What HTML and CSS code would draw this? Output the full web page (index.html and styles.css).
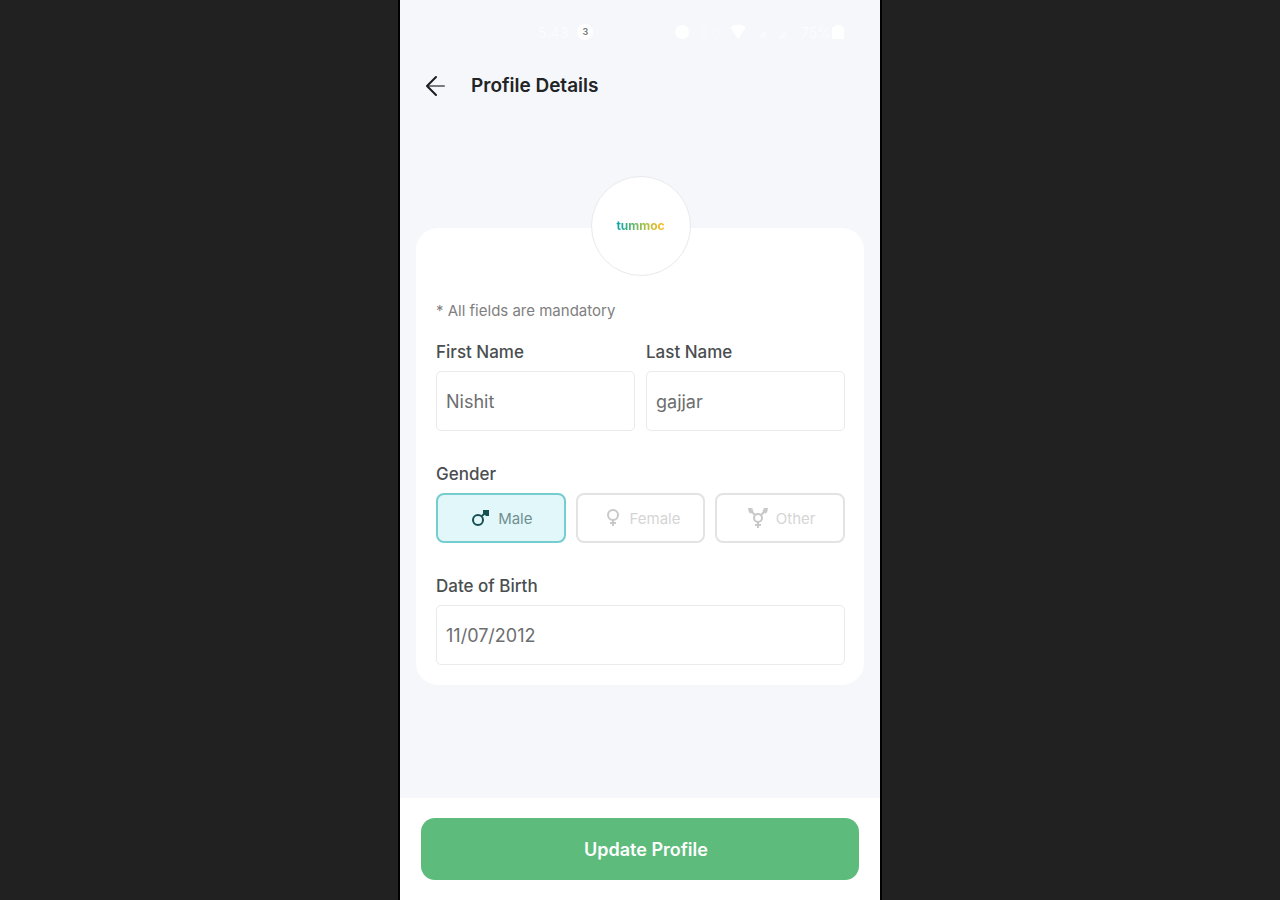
FILE: index.html
```html
<!DOCTYPE html>
<html lang="en">
<head>
    <meta charset="UTF-8">
    <meta name="viewport" content="width=device-width, initial-scale=1.0">
    <title>Profile Details</title>
    <link rel="stylesheet" href="styles.css">
</head>
<body>
    <div class="phone">
        <div class="status-bar">
            <div class="status-left">
                <span>5:43</span>
                <span class="status-badge">3</span>
            </div>
            <div class="status-right">
                <svg width="16" height="16" viewBox="0 0 16 16"><circle cx="8" cy="8" r="7" fill="#fff"/></svg>
                <span class="faint">5.0</span>
                <svg width="18" height="16" viewBox="0 0 18 16"><path d="M1 3 Q9 -2 17 3 L9 15 Z" fill="#fff"/></svg>
                <svg class="faint" width="36" height="16" viewBox="0 0 36 16"><path d="M2 14h8V6zM22 14h8V6z" fill="#fff"/></svg>
                <span class="battery">75%<svg width="14" height="16" viewBox="0 0 14 16"><path d="M1 3h3V1h6v2h3v12H1z" fill="#fff"/></svg></span>
            </div>
        </div>

        <header class="header">
            <button type="button" class="back-button" aria-label="Back">
                <svg width="22" height="22" viewBox="0 0 22 22" fill="none" stroke-linecap="round" stroke-linejoin="round">
                    <path d="M3 11h16" stroke="#77797c" stroke-width="2"/>
                    <path d="M11 2L2 11l9 9" stroke="#1b1d1f" stroke-width="2"/>
                </svg>
            </button>
            <h1>Profile Details</h1>
        </header>

        <form class="profile-form" id="profileForm">
            <div class="card">
                <div class="avatar">tummoc</div>
                <p class="note">* All fields are mandatory</p>

                <div class="name-row">
                    <div class="field">
                        <label for="firstName">First Name</label>
                        <input type="text" id="firstName" value="Nishit">
                    </div>
                    <div class="field">
                        <label for="lastName">Last Name</label>
                        <input type="text" id="lastName" value="gajjar">
                    </div>
                </div>

                <fieldset class="field">
                    <legend>Gender</legend>
                    <div class="gender-row">
                        <label class="gender-option">
                            <input type="radio" name="gender" value="male" checked>
                            <svg width="18" height="18" viewBox="0 0 18 18" fill="none" stroke="currentColor" stroke-width="2">
                                <circle cx="6" cy="11" r="5"/>
                                <path d="M10 7l3-3"/>
                                <path d="M11 1h6v6h-3l-3-3z" fill="currentColor" stroke="none"/>
                            </svg>
                            <span>Male</span>
                        </label>
                        <label class="gender-option">
                            <input type="radio" name="gender" value="female">
                            <svg width="18" height="18" viewBox="0 0 18 18" fill="none" stroke="currentColor" stroke-width="2">
                                <circle cx="9" cy="6" r="5"/>
                                <path d="M9 11v6M6 14h6"/>
                            </svg>
                            <span>Female</span>
                        </label>
                        <label class="gender-option">
                            <input type="radio" name="gender" value="other">
                            <svg width="20" height="20" viewBox="0 0 20 20" fill="none" stroke="currentColor" stroke-width="2">
                                <circle cx="10" cy="10" r="4"/>
                                <path d="M10 14v6M7 17h6M7 7L2 2M13 7l5-5M2 5l3-3M15 2l3 3"/>
                                <path d="M0 0h5L1 5zM20 0h-5l4 5z" fill="currentColor" stroke="none"/>
                            </svg>
                            <span>Other</span>
                        </label>
                    </div>
                </fieldset>

                <div class="field">
                    <label for="birthDate">Date of Birth</label>
                    <input type="text" id="birthDate" value="11/07/2012">
                </div>
            </div>
        </form>

        <footer class="footer">
            <button type="submit" form="profileForm" class="update-button">Update Profile</button>
        </footer>
    </div>
</body>
</html>
```
FILE: styles.css
```css
* {
    box-sizing: border-box;
}
body {
    font-family: Inter, "Liberation Sans", sans-serif;
    margin: 0;
    background-color: #212121;
}
.phone {
    display: flex;
    flex-direction: column;
    width: 100%;
    max-width: 480px;
    min-height: 100vh;
    margin: 0 auto;
    background-color: #f5f7fb;
    box-shadow: 0 0 0 2px #000;
}
.status-bar {
    display: flex;
    justify-content: space-between;
    align-items: center;
    height: 64px;
    padding: 0 35px 0 138px;
    font-size: 14px;
    color: #fbfcfe;
}
.status-left,
.status-right {
    display: flex;
    align-items: center;
    gap: 9px;
}
.status-badge {
    width: 16px;
    height: 16px;
    border-radius: 50%;
    background-color: #fff;
    color: #777;
    font-size: 9px;
    font-weight: 600;
    line-height: 16px;
    text-align: center;
}
.faint {
    opacity: 0.4;
}
.battery {
    display: flex;
    align-items: center;
}
.header {
    display: flex;
    align-items: center;
    gap: 24px;
    height: 44px;
    padding: 0 25px;
}
.header h1 {
    margin: 0;
    font-size: 19px;
    font-weight: 600;
    line-height: 24px;
    color: #222426;
}
.back-button {
    display: flex;
    padding: 0;
    border: none;
    background: none;
    cursor: pointer;
}
.profile-form {
    flex: 1;
    padding: 120px 16px 32px;
}
.card {
    display: flex;
    flex-direction: column;
    padding: 0 19px 20px 20px;
    border-radius: 22px;
    background-color: #fff;
}
.avatar {
    display: flex;
    align-items: center;
    justify-content: center;
    align-self: center;
    width: 100px;
    height: 100px;
    margin-top: -52px;
    padding-bottom: 2px;
    border: 1px solid #e8e9ec;
    border-radius: 50%;
    background-color: #fff;
    font-size: 12px;
    font-weight: 700;
    color: transparent;
    background-image: linear-gradient(90deg, #12a5a5 28%, #8fc050 50%, #f2b91d 70%), linear-gradient(#fff, #fff);
    background-clip: text, border-box;
}
.note {
    margin: 25px 0 21px;
    font-size: 15px;
    line-height: 20px;
    color: #808080;
}
.name-row {
    display: grid;
    grid-template-columns: 1fr 1fr;
    gap: 11px;
}
.field {
    min-width: 0;
    margin: 0 0 33px;
    padding: 0;
    border: none;
}
.field:last-child {
    margin-bottom: 0;
}
.name-row .field {
    margin-bottom: 33px;
}
.field > label,
.field legend {
    display: block;
    margin-bottom: 9px;
    padding: 0;
    font-size: 17px;
    font-weight: 500;
    line-height: 20px;
    color: #4a4e50;
}
.field > input {
    display: block;
    width: 100%;
    height: 60px;
    padding: 0 9px;
    border: 1px solid #e9eaeb;
    border-radius: 5px;
    background-color: #fff;
    font-family: inherit;
    font-size: 18px;
    color: #6c6e70;
}
.gender-row {
    display: grid;
    grid-template-columns: repeat(3, 1fr);
    gap: 10px;
}
.gender-option {
    display: flex;
    align-items: center;
    justify-content: center;
    gap: 8px;
    height: 50px;
    padding-left: 3px;
    border: 2px solid #e3e3e3;
    border-radius: 8px;
    font-size: 15px;
    color: #c8c8c8;
    cursor: pointer;
}
.gender-option span {
    color: #d5d5d5;
}
.gender-option input {
    position: absolute;
    opacity: 0;
}
.gender-option:has(input:checked) {
    border-color: #75cdcf;
    background-color: #e2f7f9;
    color: #164e52;
}
.gender-option:has(input:checked) span {
    color: #708f92;
}
.footer {
    padding: 20px 21px;
    background-color: #fff;
}
.update-button {
    display: block;
    width: 100%;
    height: 62px;
    padding: 0 0 0 12px;
    border: none;
    border-radius: 14px;
    background-color: #5dbb7c;
    font-family: inherit;
    font-size: 18px;
    font-weight: 600;
    color: #fff;
    cursor: pointer;
}
```
